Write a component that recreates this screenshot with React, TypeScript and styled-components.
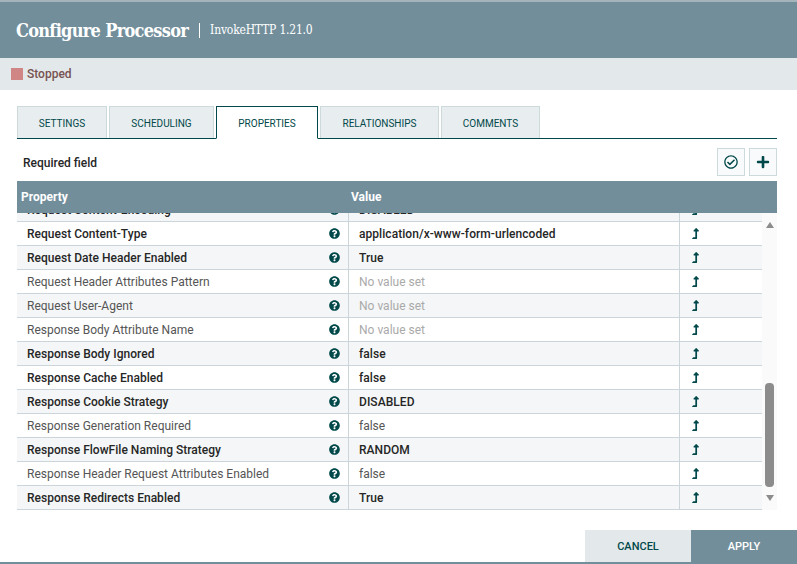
import React from "react";
import styled, { createGlobalStyle } from "styled-components";
import { FaQuestionCircle, FaRegCheckCircle, FaPlus, FaLevelUpAlt } from "react-icons/fa";

const Global = createGlobalStyle`
  html, body { margin: 0; padding: 0; background: #fff; }
  body { font-family: Roboto, "Liberation Sans", sans-serif; color: #262626; }
  * { box-sizing: border-box; }
`;

const Page = styled.div`
  width: 797px; height: 564px; display: flex; flex-direction: column; overflow: hidden;
  border-top: 2px solid #a5b4bb; border-bottom: 2px solid #728e9b;
`;
const Header = styled.header`
  height: 56px; flex: none; background: #728e9b; color: #fff;
  display: flex; align-items: center; padding: 0 16px;
`;
const Title = styled.h1`
  margin: 0; font-family: "DejaVu Serif Condensed", "DejaVu Serif", serif; font-stretch: condensed;
  font-weight: 700; font-size: 18px; letter-spacing: -0.7px;
`;
const Subtitle = styled.span`
  margin-left: 11px; padding-left: 10px; border-left: 1px solid #fff; height: 15px;
  display: flex; align-items: center;
  font-family: "DejaVu Serif Condensed", "DejaVu Serif", serif; font-stretch: condensed;
  font-size: 12px; letter-spacing: -0.2px;
`;
const Status = styled.div`
  height: 32px; flex: none; background: #e3e8eb; display: flex; align-items: center; gap: 4px;
  padding-left: 11px; font-size: 12px; font-weight: 500; color: #775351;
`;
const Square = styled.span`
  width: 12px; height: 12px; background: #d18686;
`;
const Content = styled.main`
  flex: 1; padding: 16px 20px 0 17px; display: flex; flex-direction: column;
`;
const Tabs = styled.nav`
  display: flex; gap: 2px; height: 33px; flex: none; border-bottom: 1px solid #004849;
`;
const Tab = styled.div<{ $active?: boolean; $w: number }>`
  width: ${p => p.$w}px; height: ${p => (p.$active ? 33 : 32)}px;
  display: flex; align-items: center; justify-content: center; padding-top: 2px;
  font-size: 10px; color: #004849;
  background: ${p => (p.$active ? "#fff" : "#e8edf0")};
  border: 1px solid ${p => (p.$active ? "#004849" : "#ccdadb")};
  border-bottom: ${p => (p.$active ? "1px solid #fff" : "none")};
`;
const Toolbar = styled.div`
  height: 40px; flex: none; display: flex; align-items: center; justify-content: space-between;
  padding-left: 6px; padding-top: 5px;
`;
const Required = styled.span`
  font-size: 12px; font-weight: 500; color: #262626; padding-top: 2px;
`;
const ToolButtons = styled.div`
  display: flex; gap: 4px;
`;
const ToolButton = styled.button`
  width: 28px; height: 28px; padding: 0; display: flex; align-items: center; justify-content: center;
  background: #f8fafb; border: 1px solid #ccdadb; color: #004849;
`;
const TableHead = styled.div`
  height: 32px; flex: none; background: #728e9b; color: #fff; display: flex; align-items: center;
  font-size: 12px; font-weight: 700; margin-top: 2px; padding-left: 4px;
`;
const HeadProp = styled.span`
  width: 330px;
`;
const TableWrap = styled.div`
  height: 297px; flex: none; display: flex; overflow: hidden;
`;
const Rows = styled.div`
  width: 745px; flex: none; margin-top: -15px;
`;
const Row = styled.div<{ $alt: boolean }>`
  height: 24px; display: flex; border-bottom: 1px solid #ccd5da;
  background: ${p => (p.$alt ? "#f4f6f7" : "#fff")};
`;
const PropCell = styled.div<{ $bold: boolean }>`
  width: 332px; flex: none; display: flex; align-items: center; justify-content: space-between;
  padding: 0 8px 0 10px; border-right: 1px solid #ccd5da; font-size: 12px;
  font-weight: ${p => (p.$bold ? 500 : 400)};
  letter-spacing: ${p => (p.$bold ? "0.02px" : "0")};
  color: ${p => (p.$bold ? "#262626" : "#555")};
`;
const ValueCell = styled.div<{ $bold: boolean; $unset: boolean }>`
  width: 331px; flex: none; display: flex; align-items: center; padding-left: 10px;
  border-right: 1px solid #ccd5da; font-size: 12px;
  font-weight: ${p => (p.$bold ? 500 : 400)};
  letter-spacing: ${p => (p.$bold ? "0.05px" : "0")};
  color: ${p => (p.$unset ? "#aaa" : p.$bold ? "#262626" : "#555")};
`;
const ActionCell = styled.div`
  flex: 1; display: flex; align-items: center; padding-left: 10px; color: #004849;
`;
const Help = styled(FaQuestionCircle)`
  color: #004849; width: 11px; height: 11px;
`;
const Scrollbar = styled.div`
  width: 15px; flex: none; background: #fafafa; display: flex; flex-direction: column; align-items: center;
  padding-top: 9px;
`;
const ArrowUp = styled.span`
  width: 0; height: 0; border-left: 4.5px solid transparent; border-right: 4.5px solid transparent;
  border-bottom: 6px solid #8c8c8c;
`;
const ArrowDown = styled.span`
  width: 0; height: 0; border-left: 4.5px solid transparent; border-right: 4.5px solid transparent;
  border-top: 6px solid #8c8c8c; margin-top: 8px;
`;
const Thumb = styled.div`
  width: 9px; height: 104px; background: #8c8c8c; border-radius: 4px; margin-top: 155px;
`;
const Footer = styled.footer`
  height: 32px; flex: none; display: flex; justify-content: flex-end; margin: auto -20px 0 0;
`;
const ActionButton = styled.button<{ $primary?: boolean }>`
  width: 106px; height: 32px; border: 0; padding: 0; font: 500 11px Roboto, sans-serif;
  background: ${p => (p.$primary ? "#728e9b" : "#e3e8eb")};
  color: ${p => (p.$primary ? "#fff" : "#004849")};
`;

const data: [string, string, boolean, boolean][] = [
  ["Request Content-Encoding", "DISABLED", true, false],
  ["Request Content-Type", "application/x-www-form-urlencoded", true, false],
  ["Request Date Header Enabled", "True", true, false],
  ["Request Header Attributes Pattern", "No value set", false, true],
  ["Request User-Agent", "No value set", false, true],
  ["Response Body Attribute Name", "No value set", false, true],
  ["Response Body Ignored", "false", true, false],
  ["Response Cache Enabled", "false", true, false],
  ["Response Cookie Strategy", "DISABLED", true, false],
  ["Response Generation Required", "false", false, false],
  ["Response FlowFile Naming Strategy", "RANDOM", true, false],
  ["Response Header Request Attributes Enabled", "false", false, false],
  ["Response Redirects Enabled", "True", true, false],
];

const tabs: [string, number][] = [["SETTINGS", 90], ["SCHEDULING", 105], ["PROPERTIES", 102], ["RELATIONSHIPS", 119], ["COMMENTS", 99]];

export default function App() {
  return (
    <Page>
      <Global />
      <Header>
        <Title>Configure Processor</Title>
        <Subtitle>InvokeHTTP 1.21.0</Subtitle>
      </Header>
      <Status><Square />Stopped</Status>
      <Content>
        <Tabs>
          {tabs.map(([t, w]) => <Tab key={t} $w={w} $active={t === "PROPERTIES"}>{t}</Tab>)}
        </Tabs>
        <Toolbar>
          <Required>Required field</Required>
          <ToolButtons>
            <ToolButton><FaRegCheckCircle size={14} /></ToolButton>
            <ToolButton><FaPlus size={14} /></ToolButton>
          </ToolButtons>
        </Toolbar>
        <TableHead><HeadProp>Property</HeadProp><span>Value</span></TableHead>
        <TableWrap>
          <Rows>
            {data.map(([p, v, b, u], i) => (
              <Row key={p} $alt={i % 2 === 0}>
                <PropCell $bold={b}>{p}<Help /></PropCell>
                <ValueCell $bold={b} $unset={u}>{v}</ValueCell>
                <ActionCell><FaLevelUpAlt size={11} /></ActionCell>
              </Row>
            ))}
          </Rows>
          <Scrollbar>
            <ArrowUp />
            <Thumb />
            <ArrowDown />
          </Scrollbar>
        </TableWrap>
        <Footer>
          <ActionButton>CANCEL</ActionButton>
          <ActionButton $primary>APPLY</ActionButton>
        </Footer>
      </Content>
    </Page>
  );
}
